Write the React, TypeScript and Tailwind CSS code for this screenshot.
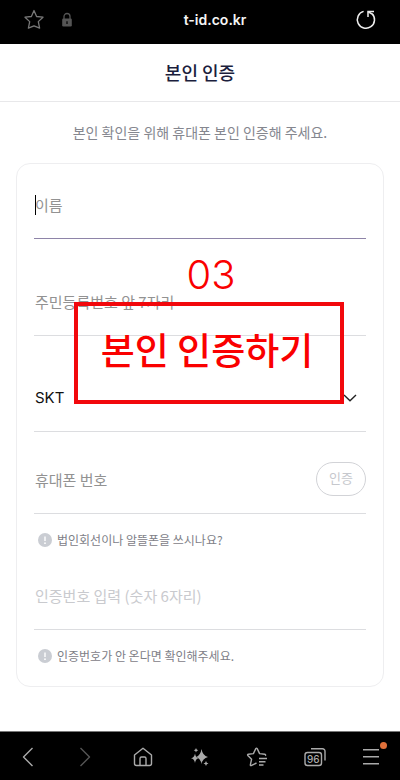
import type { ReactNode } from 'react';

export default function App() {
    return (
        <div className="relative flex min-h-screen flex-col bg-white font-['Noto_Sans_CJK_KR',sans-serif]">
            <AddressBar />
            <header className="flex h-[58px] items-center justify-center border-b border-[#e8e8ea] pb-0.5">
                <h1 className="text-lg font-medium text-[#1b1e3d]">본인 인증</h1>
            </header>
            <main className="flex-1 px-4">
                <p className="pt-5 text-center text-sm text-[#85878f]">
                    본인 확인을 위해 휴대폰 본인 인증해 주세요.
                </p>
                <VerifyForm />
            </main>
            <BottomBar />
            <Callout step="03" text="본인 인증하기" />
        </div>
    );
}

function AddressBar() {
    return (
        <div className="grid h-11 grid-cols-[60px_1fr_60px] items-center bg-black pb-1">
            <div className="flex items-center gap-4 pl-[23px]">
                <button aria-label="Bookmark" className="text-[#777]">
                    <svg width="22" height="22" viewBox="0 0 22 22" fill="none" stroke="currentColor" strokeWidth="1.3" strokeLinejoin="round">
                        <path d="M11 1.5 L13.6 7.5 L20 8.2 L15.3 12.6 L16.6 19.2 L11 16.8 L5.4 19.2 L6.7 12.6 L2 8.2 L8.4 7.5 Z" />
                    </svg>
                </button>
                <svg className="shrink-0" width="12" height="16" viewBox="0 0 12 16" fill="none">
                    <path d="M3 7 V4.5 a3 3 0 0 1 6 0 V7" stroke="#555" strokeWidth="1.3" />
                    <rect x="1.2" y="6.5" width="9.6" height="8" rx="1.3" fill="#555" />
                    <path d="M6 9.2 V12" stroke="#111" strokeWidth="1.5" />
                </svg>
            </div>
            <div className="pl-[30px] text-center font-[Inter,sans-serif] text-sm font-semibold text-[#f5f5f5]">t-id.co.kr</div>
            <button aria-label="Reload" className="justify-self-end pr-[23px] text-[#eee]">
                <svg width="22" height="22" viewBox="0 0 22 22" fill="none" stroke="currentColor" strokeWidth="1.5">
                    <path d="M8.6 2.4 A8.6 8.6 0 1 0 17 4.6" />
                    <path d="M13 8 V2.4 H19" />
                    <path d="M13 2.6 L17 5" />
                </svg>
            </button>
        </div>
    );
}

function VerifyForm() {
    return (
        <form className="mt-[21px] rounded-[14px] border border-[#eeeef0] px-[17px] pt-[9px] pb-1.5">
            <Field focused>
                <span className="absolute top-[22px] left-px h-5 w-px bg-black" />
                <TextInput label="이름" />
            </Field>
            <div className="mt-[31px]">
                <Field>
                    <TextInput label="주민등록번호 앞 7자리" />
                </Field>
            </div>
            <div className="mt-[30px]">
                <Field>
                    <select
                        aria-label="통신사"
                        className="h-full w-full appearance-none bg-transparent pl-px font-[Inter,sans-serif] text-[15px] text-[#111] outline-none"
                    >
                        <option>SKT</option>
                    </select>
                    <svg className="pointer-events-none absolute top-7 right-[9px]" width="14" height="8" viewBox="0 0 14 8" fill="none">
                        <path d="M1 1 L7 6.7 L13 1" stroke="#222" strokeWidth="1.4" />
                    </svg>
                </Field>
            </div>
            <div className="mt-4">
                <Field>
                    <TextInput label="휴대폰 번호" />
                    <button
                        type="button"
                        className="mb-1 h-[34px] w-[50px] shrink-0 rounded-full border border-[#d2d3d7] pb-0.5 text-[13px] text-[#c6c8cd]"
                    >
                        인증
                    </button>
                </Field>
            </div>
            <Hint>법인회선이나 알뜰폰을 쓰시나요?</Hint>
            <Field>
                <TextInput label="인증번호 입력 (숫자 6자리)" faint />
            </Field>
            <Hint>인증번호가 안 온다면 확인해주세요.</Hint>
        </form>
    );
}

function Field({ focused, children }: { focused?: boolean; children: ReactNode }) {
    return (
        <div className={`relative flex h-[66px] items-center border-b ${focused ? 'border-[#8e84a8]' : 'border-[#dcdde0]'}`}>
            {children}
        </div>
    );
}

function TextInput({ label, faint }: { label: string; faint?: boolean }) {
    return (
        <input
            type="text"
            aria-label={label}
            placeholder={label}
            className={`h-full w-full min-w-0 bg-transparent pb-0.5 pl-px text-[15px] outline-none ${
                faint ? 'placeholder:text-[#c9cace]' : 'placeholder:text-[#929292]'
            }`}
        />
    );
}

function Hint({ children }: { children: ReactNode }) {
    return (
        <div className="flex h-[50px] items-center gap-[5px] pt-0.5 pl-1">
            <svg width="14" height="14" viewBox="0 0 14 14">
                <circle cx="7" cy="7" r="7" fill="#cacdd3" />
                <path d="M7 3.4 V8" stroke="#fff" strokeWidth="1.4" />
                <circle cx="7" cy="10.2" r="0.9" fill="#fff" />
            </svg>
            <a href="#" className="text-xs text-[#7e8087]">{children}</a>
        </div>
    );
}

/** Red step marker laid over the form. */
function Callout({ step, text }: { step: string; text: string }) {
    return (
        <div className="pointer-events-none absolute top-[248px] right-[56px] left-[74px] text-[#fa0000]">
            <div className="pl-1 text-center font-[Inter,sans-serif] text-[40px] leading-[54px] font-light">{step}</div>
            <div className="flex h-[102px] items-center justify-center border-4 border-[#f2080c] pr-1 pb-2 text-[37px] leading-none font-medium">
                {text}
            </div>
        </div>
    );
}

function BottomBar() {
    return (
        <nav className="flex h-[49px] items-center justify-between border-t border-[#777] bg-black px-4 pt-0.5">
            <NavButton label="Back">
                <path d="M16.5 3 L7.5 12 L16.5 21" />
            </NavButton>
            <NavButton label="Forward" dim>
                <path d="M7.5 3 L16.5 12 L7.5 21" />
            </NavButton>
            <NavButton label="Home">
                <path d="M3.5 10 L12 3.2 L20.5 10 V18.5 a2 2 0 0 1 -2 2 H5.5 a2 2 0 0 1 -2 -2 Z" />
                <path d="M9 20.5 V13.5 a1.5 1.5 0 0 1 1.5 -1.5 h3 a1.5 1.5 0 0 1 1.5 1.5 V20.5" />
            </NavButton>
            <NavButton label="Assistant">
                <g fill="currentColor" stroke="none">
                    <path d="M13.5 4 Q14.5 10.5 20 12 Q14.5 13.5 13.5 19 Q12.5 13.5 8 12 Q12.5 10.5 13.5 4 Z" />
                    <path d="M7 8.5 Q7.6 12.5 10.5 13.2 Q7.6 14 7 18 Q6.4 14 3 13.2 Q6.4 12.5 7 8.5 Z" />
                    <path d="M8 3 L8.7 4.6 L10.3 5.3 L8.7 6 L8 7.6 L7.3 6 L5.7 5.3 L7.3 4.6 Z" />
                    <path d="M18 16 L18.8 17.8 L20.5 18.5 L18.8 19.2 L18 21 L17.2 19.2 L15.5 18.5 L17.2 17.8 Z" />
                </g>
            </NavButton>
            <NavButton label="Bookmarks">
                <path d="M11.5 18 L6.2 20.6 Q5.2 20.8 5.4 19.6 L6.6 14.2 L2.8 10.4 Q2.2 9.4 3.4 9.2 L8.4 8.6 L10.8 3.6 Q11.5 2.6 12.2 3.6 L14.6 8.6 L19.8 9.2 Q21.2 9.6 20.2 10.8" />
                <path d="M14 13.5 H22 M14 16.8 H20.5 M14 20 H18.5" />
            </NavButton>
            <NavButton label="Tabs">
                <path d="M8 3.8 H19.5 a2.5 2.5 0 0 1 2.5 2.5 V15.5" />
                <rect x="2" y="7.5" width="16.5" height="13" rx="2.5" />
                <text x="10.2" y="17.7" textAnchor="middle" fontSize="10" fontWeight="500" fontFamily="Inter, sans-serif" fill="currentColor" stroke="none">96</text>
            </NavButton>
            <div className="relative flex">
                <NavButton label="Menu">
                    <path d="M3 4.7 H19 M3 11.7 H19 M3 18.7 H19" />
                </NavButton>
                <span className="absolute -top-[3px] -right-[3px] size-[7px] rounded-full bg-[#e0703a]" />
            </div>
        </nav>
    );
}

function NavButton({ label, dim, children }: { label: string; dim?: boolean; children: ReactNode }) {
    return (
        <button aria-label={label} className={dim ? 'text-[#555]' : 'text-[#aaa]'}>
            <svg width="24" height="24" viewBox="0 0 24 24" fill="none" stroke="currentColor" strokeWidth="1.4" strokeLinejoin="round">
                {children}
            </svg>
        </button>
    );
}
